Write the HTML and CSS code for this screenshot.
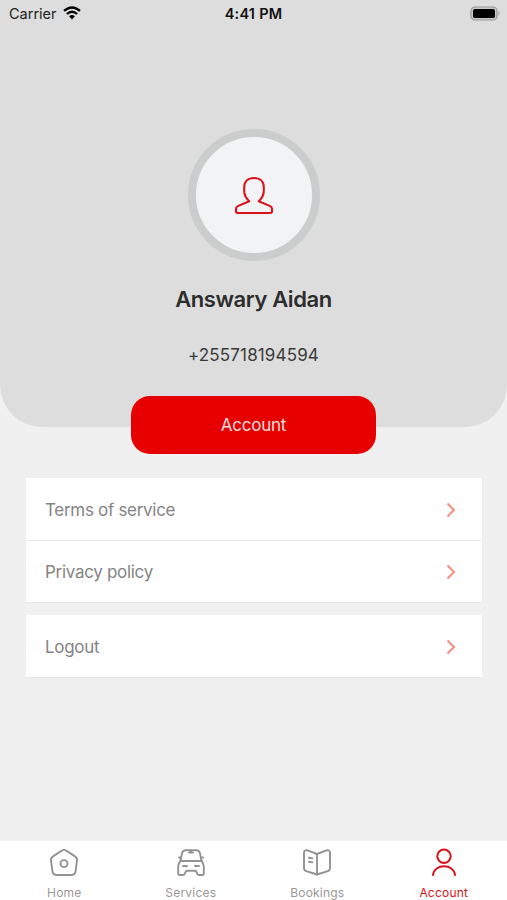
FILE: index.html
```
<!DOCTYPE html>
<html lang="en">
<head>
    <meta charset="UTF-8">
    <meta name="viewport" content="width=device-width, initial-scale=1.0">
    <title>Account</title>
    <link rel="stylesheet" href="styles.css">
</head>
<body>
    <header class="profile">
        <div class="status-bar">
            <div class="carrier">
                <span>Carrier</span>
                <svg class="wifi" width="18" height="14" viewBox="0 0 18 14">
                    <path d="M1 4.9 Q9 -2.1 17 4.9" fill="none" stroke="#000" stroke-width="2.4"/>
                    <path d="M3.9 8 Q9 3.6 14.1 8" fill="none" stroke="#000" stroke-width="2.3"/>
                    <path d="M6.1 10.3 Q9 7.9 11.9 10.3 L9 13.5 Z" fill="#000"/>
                </svg>
            </div>
            <div class="time">4:41 PM</div>
            <svg class="battery" width="31" height="15" viewBox="0 0 31 15">
                <rect x="1" y="1" width="26" height="13" rx="4" fill="#c8c8c8" stroke="#999" stroke-width="1.2"/>
                <rect x="3" y="3" width="22" height="9" rx="1.8" fill="#000"/>
                <path d="M28.6 5 Q30.6 7.5 28.6 10 Z" fill="#999"/>
            </svg>
        </div>

        <div class="avatar">
            <svg width="40" height="40" viewBox="0 0 40 40" fill="none" stroke="#d8121a" stroke-width="2.1" stroke-linejoin="round">
                <path d="M15.2 26.3 C11.8 23 10.2 19.5 10.2 16 V12.5 C10.2 6.6 14.1 3 20 3 S29.8 6.6 29.8 12.5 V16 C29.8 19.5 28.2 23 24.8 26.3 L36.2 31.1 Q38 32 38 34 V36.3 Q38 38 36.2 38 H3.8 Q2 38 2 36.3 V34 Q2 32 3.8 31.1 Z"/>
            </svg>
        </div>
        <h1 class="name">Answary Aidan</h1>
        <p class="phone">+255718194594</p>
        <button class="account-btn">Account</button>
    </header>

    <main class="menu">
        <div class="menu-group">
            <a class="menu-item">
                <span>Terms of service</span>
                <svg class="chevron" width="10" height="16" viewBox="0 0 10 16"><path d="M1.5 1.5 L8 8 L1.5 14.5"/></svg>
            </a>
            <a class="menu-item">
                <span>Privacy policy</span>
                <svg class="chevron" width="10" height="16" viewBox="0 0 10 16"><path d="M1.5 1.5 L8 8 L1.5 14.5"/></svg>
            </a>
        </div>
        <div class="menu-group">
            <a class="menu-item">
                <span>Logout</span>
                <svg class="chevron" width="10" height="16" viewBox="0 0 10 16"><path d="M1.5 1.5 L8 8 L1.5 14.5"/></svg>
            </a>
        </div>
    </main>

    <nav class="tab-bar">
        <a class="tab">
            <svg class="tab-icon" width="32" height="32" viewBox="0 0 32 32">
                <path d="M13.9 3.5 Q16 2.2 18.1 3.5 L27.3 9.6 Q29.3 11 29 13.4 L27.5 24.7 Q27 28 23.8 28 H8.2 Q5 28 4.5 24.7 L3 13.4 Q2.7 11 4.7 9.6 Z"/>
                <circle cx="16" cy="16.6" r="3.5"/>
            </svg>
            <span>Home</span>
        </a>
        <a class="tab">
            <svg class="tab-icon" width="32" height="32" viewBox="0 0 32 32">
                <path d="M5.5 14 L7 6.4 Q7.7 3.2 10.6 3.2 H21.4 Q24.3 3.2 25 6.4 L26.5 14"/>
                <path d="M5.2 14 H26.8 L28.2 17 Q28.8 18.4 28.8 20 V26.2 Q28.8 28 27 28 H24.2 Q22.5 28 22.1 26.5 L21.6 25.1 Q21.2 23.8 19.8 23.8 H12.2 Q10.8 23.8 10.4 25.1 L9.9 26.5 Q9.5 28 7.8 28 H5 Q3.2 28 3.2 26.2 V20 Q3.2 18.4 3.8 17 Z"/>
                <path d="M4 10.5 H5.8 M26.2 10.5 H28 M8 19 H12 M20 19 H24 M14 5.5 H18 M16 3.6 V5.5"/>
            </svg>
            <span>Services</span>
        </a>
        <a class="tab">
            <svg class="tab-icon" width="32" height="32" viewBox="0 0 32 32">
                <path d="M16 7 L24.8 3.6 Q29 2.3 29 5.8 V21 Q29 23.5 26.8 24.2 L16 27.5 L5.2 24.2 Q3 23.5 3 21 V5.8 Q3 2.3 7.2 3.6 Z"/>
                <path d="M16 7 V27.5 M8 10.8 L11.4 11.4 M8 14.8 L11.4 15.4"/>
            </svg>
            <span>Bookings</span>
        </a>
        <a class="tab active">
            <svg class="tab-icon" width="32" height="32" viewBox="0 0 32 32">
                <circle cx="16" cy="9.3" r="6.7"/>
                <path d="M5 28 C6.2 16.4 25.8 16.4 27 28"/>
            </svg>
            <span>Account</span>
        </a>
    </nav>
</body>
</html>
```
FILE: styles.css
```
* {
    margin: 0;
    padding: 0;
    box-sizing: border-box;
}

body {
    font-family: Inter, "Liberation Sans", sans-serif;
    background: #f0f0f0;
    height: 100vh;
    overflow: hidden;
    display: flex;
    flex-direction: column;
}

/* Profile header */
.profile {
    height: 427px;
    flex-shrink: 0;
    background: #dddddd;
    border-radius: 0 0 42px 42px;
    display: flex;
    flex-direction: column;
    align-items: center;
}

.status-bar {
    width: 100%;
    height: 27px;
    flex-shrink: 0;
    padding: 0 6px 0 9px;
    display: grid;
    grid-template-columns: 1fr auto 1fr;
    align-items: center;
    font-size: 14.5px;
    color: #222;
}

.carrier {
    display: flex;
    align-items: center;
    gap: 6px;
}

.wifi {
    margin-bottom: 2px;
}

.time {
    margin-right: 3px;
    font-weight: 600;
    letter-spacing: 0.25px;
    color: #111;
}

.battery {
    justify-self: end;
}

.avatar {
    width: 132px;
    height: 132px;
    flex-shrink: 0;
    margin-top: 102px;
    border: 8px solid #cbcccc;
    border-radius: 50%;
    background: #f1f3f5;
    display: flex;
    align-items: center;
    justify-content: center;
}

.name {
    margin-top: 24px;
    font-size: 22px;
    line-height: 28px;
    font-weight: 600;
    letter-spacing: -0.4px;
    color: #2d2d2d;
}

.phone {
    margin-top: 32px;
    font-size: 17px;
    line-height: 20px;
    letter-spacing: 0.15px;
    color: #3a3a3a;
}

.account-btn {
    width: 245px;
    height: 58px;
    flex-shrink: 0;
    margin-top: 31px;
    border: none;
    border-radius: 19px;
    background: #e60000;
    color: #f6dede;
    font-family: inherit;
    font-size: 17px;
    letter-spacing: -0.25px;
}

/* Menu */
.menu {
    flex: 1;
    padding: 51px 25px 0 26px;
    display: flex;
    flex-direction: column;
    gap: 13px;
}

.menu-group {
    background: #fff;
    box-shadow: 0 1px 1px #e6e6e6;
}

.menu-item {
    height: 62px;
    padding: 1px 26px 0 19px;
    display: flex;
    align-items: center;
    justify-content: space-between;
    font-size: 17px;
    letter-spacing: -0.3px;
    color: #848484;
}

.menu-item + .menu-item {
    border-top: 1px solid #e8e8e8;
}

.chevron {
    fill: none;
    stroke: #f4907f;
    stroke-width: 2;
}

/* Bottom tabs */
.tab-bar {
    height: 59px;
    padding-left: 1px;
    background: #fff;
    display: grid;
    grid-template-columns: repeat(4, 1fr);
}

.tab {
    padding-top: 6px;
    display: flex;
    flex-direction: column;
    align-items: center;
    gap: 6px;
    font-size: 12px;
    line-height: 16px;
    letter-spacing: 0.2px;
    color: #999;
}

.tab-icon {
    fill: none;
    stroke: #929292;
    stroke-width: 1.9;
    stroke-linecap: round;
    stroke-linejoin: round;
}

.tab.active {
    color: #d8121a;
}

.tab.active .tab-icon {
    stroke: #d8121a;
    stroke-width: 2;
}
```
